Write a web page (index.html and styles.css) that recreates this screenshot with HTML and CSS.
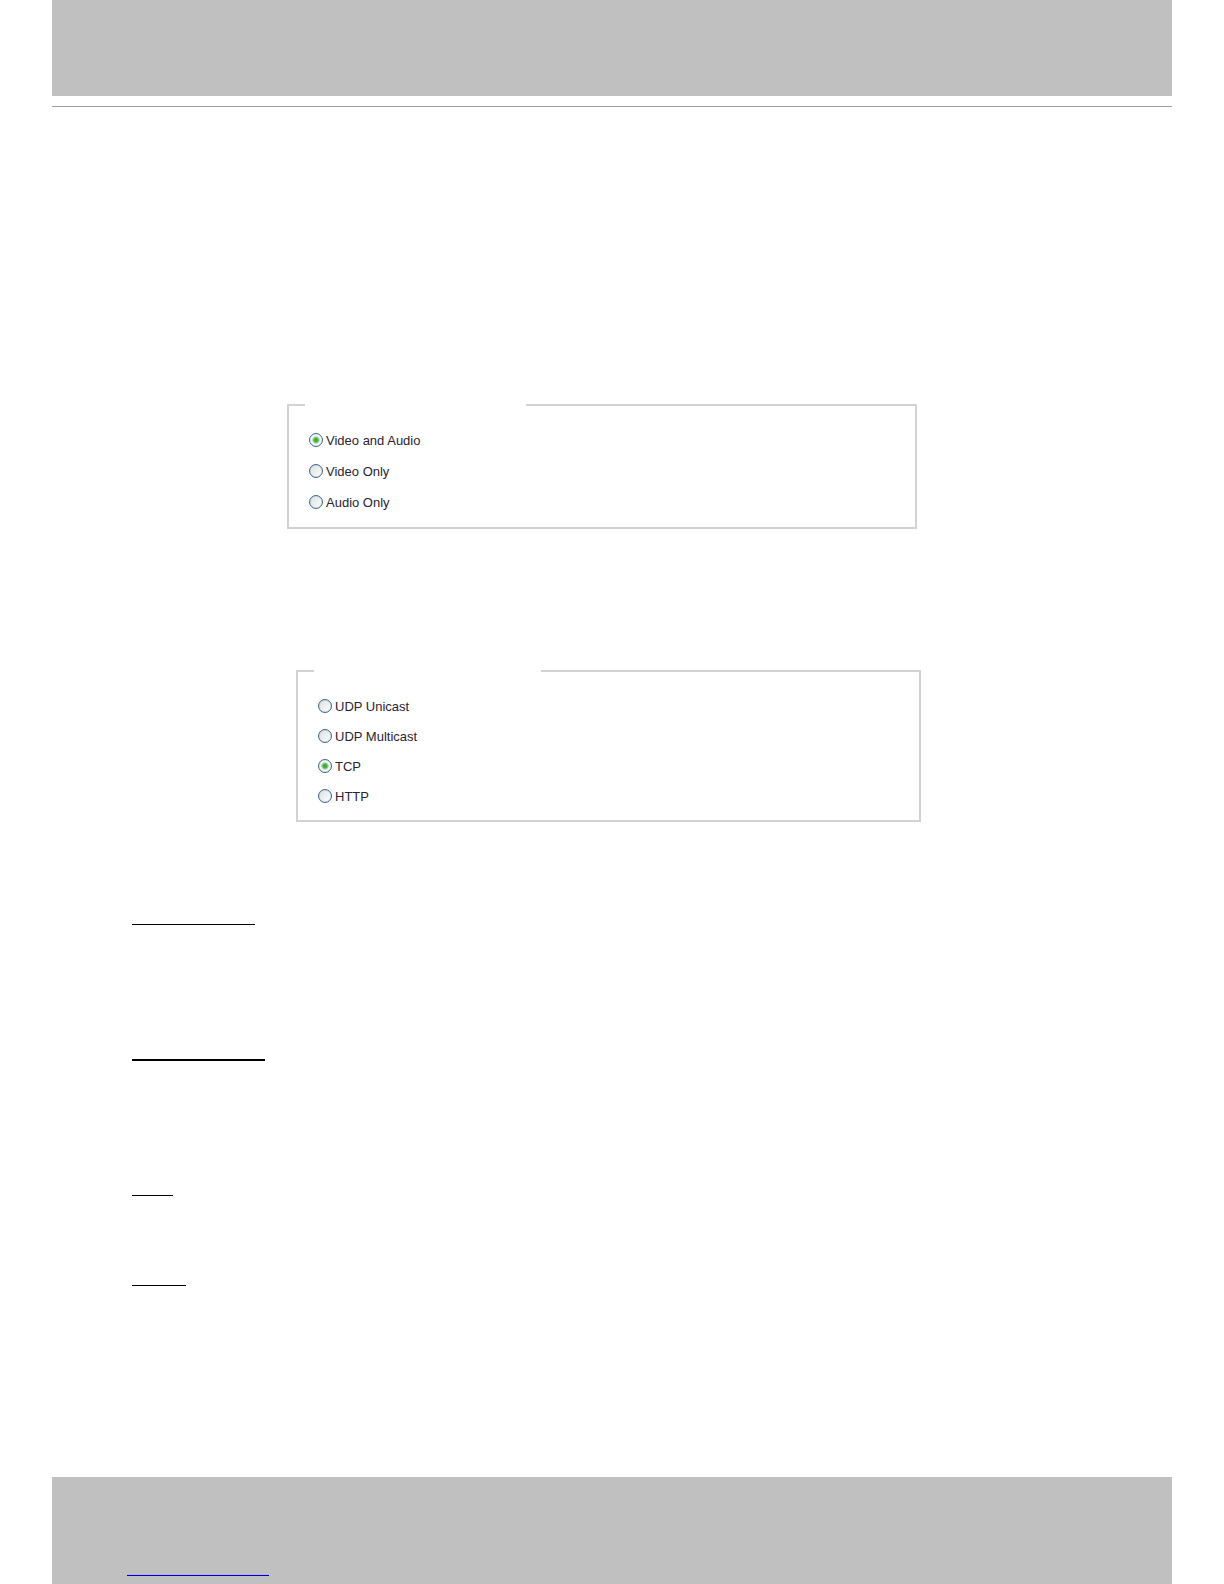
FILE: index.html
```html
<!DOCTYPE html>
<html lang="en">
<head>
    <meta charset="UTF-8">
    <meta name="viewport" content="width=device-width, initial-scale=1.0">
    <title>Video and Audio</title>
    <link rel="stylesheet" href="styles.css">
</head>
<body>
    <div class="page">
        <header class="top-bar"></header>
        <hr class="top-line">

        <main class="content">
            <!-- media options -->
            <fieldset class="options media" aria-label="Media">
                <legend></legend>
                <label class="option"><input type="radio" name="media" checked>Video and Audio</label>
                <label class="option"><input type="radio" name="media">Video Only</label>
                <label class="option"><input type="radio" name="media">Audio Only</label>
            </fieldset>

            <!-- protocol options -->
            <fieldset class="options protocol" aria-label="Protocol">
                <legend></legend>
                <label class="option"><input type="radio" name="protocol">UDP Unicast</label>
                <label class="option"><input type="radio" name="protocol">UDP Multicast</label>
                <label class="option"><input type="radio" name="protocol" checked>TCP</label>
                <label class="option"><input type="radio" name="protocol">HTTP</label>
            </fieldset>

            <div class="notes">
                <div class="underline unicast"></div>
                <div class="underline multicast"></div>
                <div class="underline tcp"></div>
                <div class="underline http"></div>
            </div>
        </main>

        <footer class="bottom-bar">
            <a class="footer-link" href="#" aria-label="Website"></a>
        </footer>
    </div>
</body>
</html>
```
FILE: styles.css
```css
*{
    margin: 0;
    padding: 0;
    box-sizing: border-box;
}
body{
    background-color: #fff;
    color: #2b2333;
    font-family: "Liberation Sans", Arial, sans-serif;
    font-size: 13px;
}
.page{
    min-height: 100vh;
    margin: 0 52px;
    display: flex;
    flex-direction: column;
}
.top-bar{
    height: 96px;
    background-color: #c0c0c0;
}
.top-line{
    margin-top: 10px;
    border: none;
    border-top: 1px solid #a0a0a0;
}
.content{
    flex: 1;
    padding: 297px 0 190px;
}
.options{
    border: 2px solid #d2d2d0;
    padding: 19px 16px 9px;
}
.options legend{
    height: 2px;
}
.media{
    margin: 0 255px 0 235px;
}
.media legend{
    width: 221px;
}
.protocol{
    margin: 141px 251px 0 244px;
}
.protocol legend{
    width: 227px;
}
.option{
    display: flex;
    align-items: center;
    gap: 3px;
    height: 30px;
    padding-left: 4px;
}
.media .option{
    height: 31px;
}
.option input{
    appearance: none;
    width: 14px;
    height: 14px;
    margin-bottom: 1px;
    border: 1px solid #44688c;
    border-radius: 50%;
    background: linear-gradient(135deg, #dcdfe0, #fff);
    box-shadow: inset 0 0 1px #7f9fbb;
}
.option input:checked{
    background: radial-gradient(circle, #35a52e 0, #4fb548 2px, #e9f3e8 4px, #fff 5px);
}
.notes{
    padding: 102px 80px 0;
}
.underline{
    border-bottom: 1px solid #000;
}
.unicast{
    width: 123px;
}
.multicast{
    width: 133px;
    margin-top: 134px;
    border-bottom-width: 2px;
}
.tcp{
    width: 41px;
    margin-top: 134px;
}
.http{
    width: 54px;
    margin-top: 89px;
}
.bottom-bar{
    height: 107px;
    padding: 97px 75px 0;
    background-color: #c0c0c0;
}
.footer-link{
    display: block;
    width: 142px;
    height: 2px;
    border-top: 1px solid #b0b0f4;
    border-bottom: 1px solid #0000b4;
}
```
